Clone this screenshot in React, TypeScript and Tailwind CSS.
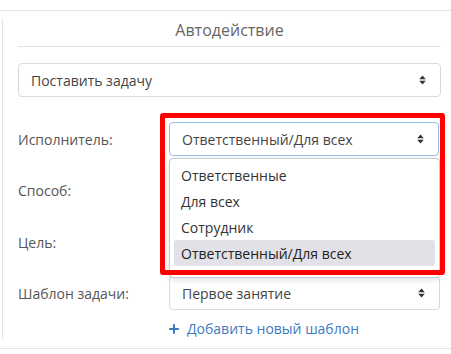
import { Plus } from 'lucide-react'

const font = { fontFamily: '"Open Sans", "Noto Sans", sans-serif' }

function Arrows() {
  return (
    <svg width="7" height="10" viewBox="0 0 7 10" className="shrink-0">
      <path d="M3.5 0.5 L6.8 4.2 H0.2 Z" fill="#333" />
      <path d="M3.5 9.5 L6.8 5.8 H0.2 Z" fill="#333" />
    </svg>
  )
}

function Select({ value, focused = false }: { value: string; focused?: boolean }) {
  return (
    <div
      className={`flex items-center justify-between h-[34px] pl-[12px] pr-[14px] rounded-[4px] border bg-white text-[14px] text-[#444] ${
        focused ? 'border-[#93c0ea]' : 'border-[#d9d9df]'
      }`}
    >
      <span>{value}</span>
      <Arrows />
    </div>
  )
}

function Row({ label, children, className = '' }: { label: string; children?: React.ReactNode; className?: string }) {
  return (
    <div className={`flex items-center h-[34px] ${className}`}>
      <div className="w-[151px] shrink-0 text-[14px] text-[#555]">{label}</div>
      <div className="flex-1">{children}</div>
    </div>
  )
}

const ITEMS = ['Ответственные', 'Для всех', 'Сотрудник', 'Ответственный/Для всех']

export default function App() {
  return (
    <div className="relative w-[451px] h-[354px] bg-white overflow-hidden" style={font}>
      <div className="mt-[10px] border-t border-[#e4e4ea]" />
      <div className="ml-[2px] mt-[8px] h-[320px] border-l border-[#e2e2ea] pl-[15px] pr-[10px]">
        <div className="h-[27px] text-center text-[16px] leading-[22px] text-[#666]">Автодействие</div>
        <div className="border-t border-[#e2e2e8]" />
        <div className="mt-[16px]">
          <Select value="Поставить задачу" />
        </div>

        <Row label="Исполнитель:" className="mt-[25px] pr-[2px]">
          <Select value="Ответственный/Для всех" focused />
        </Row>
        <Row label="Способ:" className="mt-[17px]" />
        <Row label="Цель:" className="mt-[18px]" />
        <Row label="Шаблон задачи:" className="mt-[17px] pr-[1px]">
          <Select value="Первое занятие" />
        </Row>

        <div className="mt-[8px] ml-[149px] flex items-center gap-[6px] text-[14px] text-[#3b7bbf]">
          <Plus size={14} strokeWidth={3.4} />
          <span>Добавить новый шаблон</span>
        </div>
      </div>
      <div className="mt-[9px] border-t border-[#e4e4ea]" />

      {/* open dropdown */}
      <div className="absolute left-[169px] top-[158px] w-[271px] h-[120px] rounded-[4px] border border-[#c9c9cf] bg-white px-[4px] pt-[3px] shadow-[0_2px_6px_rgba(0,0,0,0.12)] text-[14px] text-[#333]">
        {ITEMS.map((it, i) => (
          <div
            key={it}
            className={`h-[26px] flex items-center pl-[7px] rounded-[3px] ${i === 3 ? 'bg-[#e1e1e7] text-[#222]' : ''}`}
          >
            {it}
          </div>
        ))}
      </div>

      {/* highlight frame */}
      <div className="absolute left-[160px] top-[113px] w-[285px] h-[162px] border-[5px] border-[#ff0000] rounded-[3px]" />
    </div>
  )
}
